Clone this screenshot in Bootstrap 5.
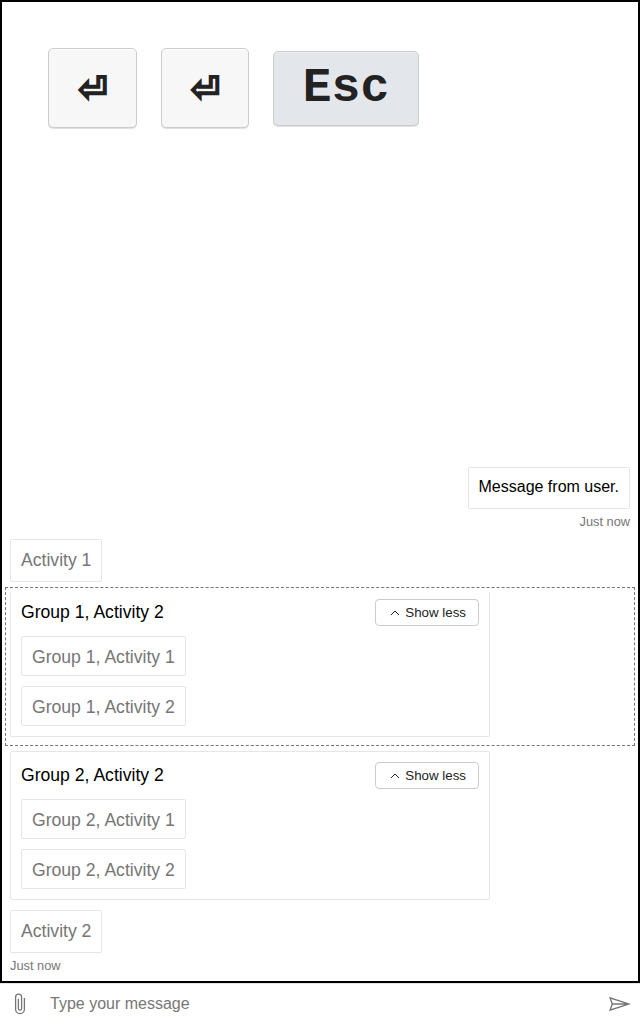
<!DOCTYPE html>
<html lang="en">
<head>
<meta charset="utf-8">
<meta name="viewport" content="width=device-width, initial-scale=1">
<title>Chat</title>
<link href="https://cdn.jsdelivr.net/npm/bootstrap@5.3.0/dist/css/bootstrap.min.css" rel="stylesheet">
<style>
body{font-family:"Liberation Sans",Arial,sans-serif;color:#000;background:#fff;font-size:16px;line-height:20px}
.app{height:1024px;overflow:hidden}
.transcript{height:983px;border:2px solid #000;padding:0 8px 8px}
.keys{gap:24px;left:48px;top:48px}
.keycap{font:bold 48px/54px "Liberation Mono",monospace;color:#222;background:#f7f7f7;border:1px solid #ccc;border-radius:5px;padding:0 28.8px;height:80px;box-shadow:0 1px 0 rgba(0,0,0,.12),inset 0 1px 0 #fff}
.keycap.enter{padding:14px 0 0 29.6px;font-family:"Liberation Mono","DejaVu Sans Mono",monospace;width:88.5px;white-space:nowrap;-webkit-text-stroke:1.6px #222}
.keycap.esc{height:75px;background:#e3e6eb;padding-top:9px;box-shadow:0 1px 0 rgba(0,0,0,.12),inset 0 1px 0 #eef0f3}
.bubble{border:1px solid #e6e6e6;border-radius:2px;background:#fff}
.user{padding:10px 9.5px;width:162px;height:42px;white-space:nowrap;line-height:18px}
.stamp{font-size:12.8px;line-height:15px;color:#767676}
.activity{font-size:17.6px;color:#767676;padding:0 10px;height:43px;line-height:40px;width:92px;white-space:nowrap}
.activity.inner{height:40px;line-height:40px;width:165px}
.focus{border:1px dashed #767676;margin:5px -5px 0 -5px;padding:4px 4px 8px;height:159px}
.group{width:480px;height:149px;padding:10px}
.focus .group{height:145px;border-top:0;padding-top:7px;border-top-left-radius:0;border-top-right-radius:0}
.group-title{font-size:17.6px;line-height:24px;padding-bottom:2px}
.toggle{font-size:13.33px;line-height:15px;width:104px;height:27px;padding:0 12px;color:#222;border:1px solid #ccc;border-radius:4px;background:#fff;white-space:nowrap}
.sendbox{height:41px;border-top:1px solid #e6e6e6;color:#767676}
</style>
</head>
<body>
<div class="app d-flex flex-column position-relative">
  <div class="keys d-flex align-items-center position-absolute">
    <kbd class="keycap enter">⏎</kbd>
    <kbd class="keycap enter">⏎</kbd>
    <kbd class="keycap esc">Esc</kbd>
  </div>
  <main class="transcript d-flex flex-column justify-content-end">
    <div class="d-flex flex-column align-items-end">
      <div class="bubble user">Message from user.</div>
      <div class="stamp" style="margin-top:5px">Just now</div>
    </div>
    <div class="bubble activity" style="margin-top:10px">Activity 1</div>
    <section class="focus">
      <div class="bubble group">
        <div class="d-flex justify-content-between align-items-center">
          <div class="group-title">Group 1, Activity 2</div>
          <button class="toggle d-flex align-items-center justify-content-between"><svg width="14" height="10" viewBox="0 0 14 10" fill="none" stroke="#222" stroke-width="1"><path d="M3 7 7 3l4 4"/></svg>Show less</button>
        </div>
        <div class="bubble activity inner" style="margin-top:10px">Group 1, Activity 1</div>
        <div class="bubble activity inner" style="margin-top:10px">Group 1, Activity 2</div>
      </div>
    </section>
    <div class="bubble group" style="margin-top:5px">
      <div class="d-flex justify-content-between align-items-center">
        <div class="group-title">Group 2, Activity 2</div>
        <button class="toggle d-flex align-items-center justify-content-between"><svg width="14" height="10" viewBox="0 0 14 10" fill="none" stroke="#222" stroke-width="1"><path d="M3 7 7 3l4 4"/></svg>Show less</button>
      </div>
      <div class="bubble activity inner" style="margin-top:10px">Group 2, Activity 1</div>
      <div class="bubble activity inner" style="margin-top:10px">Group 2, Activity 2</div>
    </div>
    <div class="bubble activity" style="margin-top:10px">Activity 2</div>
    <div class="stamp" style="margin-top:5px">Just now</div>
  </main>
  <footer class="sendbox d-flex align-items-center">
    <svg width="40" height="40" viewBox="0 0 40 40" fill="none" stroke="#767676" stroke-width="1.3"><path d="M24.4 14v11.3a4.4 4.4 0 0 1-8.8 0V13.2a3 3 0 0 1 6 0V24.6a1.6 1.6 0 0 1-3.2 0V14.8"/></svg>
    <div class="flex-grow-1" style="padding-left:10px">Type your message</div>
    <svg width="28" height="28" viewBox="0 0 45.7 33.8" style="margin-right:6px" fill="#767676"><path fill-rule="evenodd" d="M8.55 25.25l21.67-7.25H11zm2.41-9.47h19.26l-21.67-7.23zm-6 13l4-11.9L5 5l35.7 11.9z"/></svg>
  </footer>
</div>
<script src="https://cdn.jsdelivr.net/npm/bootstrap@5.3.0/dist/js/bootstrap.bundle.min.js"></script>
</body>
</html>
